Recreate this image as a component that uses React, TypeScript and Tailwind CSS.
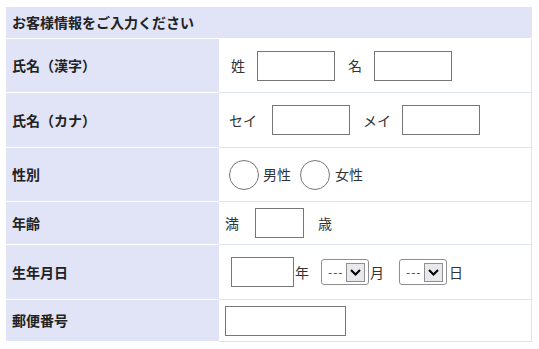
import React from "react";

const font = { fontFamily: '"Noto Sans CJK JP", "Noto Sans", sans-serif' };

function Row({
  label,
  h,
  children,
}: {
  label: string;
  h: string;
  children: React.ReactNode;
}) {
  return (
    <div className={`flex ${h}`}>
      <div className="flex w-[213px] shrink-0 items-center border-b border-white bg-[#e1e4f6] pl-[6px] text-[14px] font-bold text-[#222]">
        {label}
      </div>
      <div className="flex flex-1 items-center border-r border-b border-[#dfe1f5] text-[14px] text-[#333]">
        {children}
      </div>
    </div>
  );
}

function Box({ w, h = "h-[30px]" }: { w: string; h?: string }) {
  return <input type="text" className={`${w} ${h} border border-[#767676] bg-white outline-none`} />;
}

function Radio() {
  return <span className="inline-block h-[30px] w-[30px] rounded-full border border-[#767676] bg-white" />;
}

function Select() {
  return (
    <div className="flex h-[26px] w-[48px] items-center rounded-[3px] border border-[#8f8f8f] bg-white pl-[6px]">
      <span className="text-[12px] leading-none tracking-[1px] text-[#1f3a9a]">---</span>
      <span className="ml-auto mr-[3px] flex h-[19px] w-[19px] items-center justify-center border border-[#8f8f8f] bg-[#e9e9ed]">
        <svg width="11" height="7" viewBox="0 0 11 7">
          <path d="M1 1 L5.5 5.5 L10 1" fill="none" stroke="#000" strokeWidth="2" />
        </svg>
      </span>
    </div>
  );
}

export default function App() {
  return (
    <div className="min-h-screen bg-white pt-[7px] pl-[6px]" style={font}>
      <div className="w-[526px]">
        <div className="flex h-[32px] items-center border-b border-white bg-[#e1e4f6] pl-[6px] text-[14px] font-bold text-[#222]">
          お客様情報をご入力ください
        </div>
        <Row label="氏名（漢字）" h="h-[54px]">
          <span className="ml-[12px]">姓</span>
          <span className="ml-[12px]">
            <Box w="w-[78px]" />
          </span>
          <span className="ml-[13px]">名</span>
          <span className="ml-[12px]">
            <Box w="w-[78px]" />
          </span>
        </Row>
        <Row label="氏名（カナ）" h="h-[55px]">
          <span className="ml-[10px]">セイ</span>
          <span className="ml-[15px]">
            <Box w="w-[78px]" />
          </span>
          <span className="ml-[13px]">メイ</span>
          <span className="ml-[11px]">
            <Box w="w-[78px]" />
          </span>
        </Row>
        <Row label="性別" h="h-[54px]">
          <span className="ml-[10px] flex items-center">
            <Radio />
          </span>
          <span className="ml-[4px]">男性</span>
          <span className="ml-[9px] flex items-center">
            <Radio />
          </span>
          <span className="ml-[5px]">女性</span>
        </Row>
        <Row label="年齢" h="h-[43px]">
          <span className="ml-[6px]">満</span>
          <span className="ml-[16px]">
            <Box w="w-[49px]" />
          </span>
          <span className="ml-[14px]">歳</span>
        </Row>
        <Row label="生年月日" h="h-[55px]">
          <span className="ml-[12px]">
            <Box w="w-[63px]" />
          </span>
          <span className="ml-[1px]">年</span>
          <span className="ml-[12px]">
            <Select />
          </span>
          <span className="ml-[1px]">月</span>
          <span className="ml-[15px]">
            <Select />
          </span>
          <span className="ml-[2px]">日</span>
        </Row>
        <Row label="郵便番号" h="h-[42px]">
          <span className="ml-[6px]">
            <Box w="w-[121px]" />
          </span>
        </Row>
      </div>
    </div>
  );
}
